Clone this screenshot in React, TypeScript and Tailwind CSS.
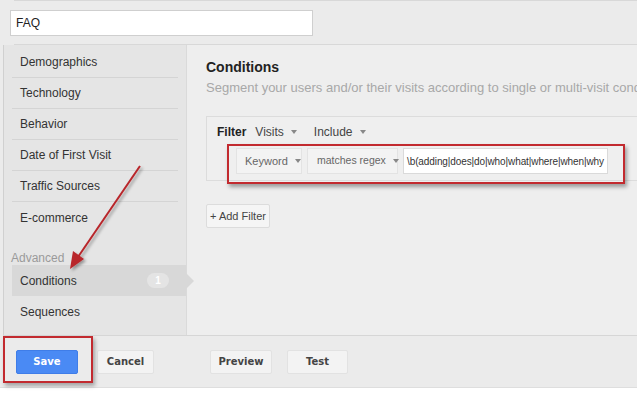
import React from 'react';

const menuItems = ['Demographics', 'Technology', 'Behavior', 'Date of First Visit', 'Traffic Sources', 'E-commerce'];

const Caret = () => (
  <span className="ml-[7px] inline-block w-0 h-0 border-l-[3px] border-r-[3px] border-t-[4px] border-l-transparent border-r-transparent border-t-[#888] align-middle" />
);

const SideItem: React.FC<{ label: string; last?: boolean }> = ({ label, last }) => (
  <div className={`h-[31px] mx-[8px] flex items-center pl-[8px] text-[12px] text-[#333] ${last ? '' : 'border-b border-[#d4d4d4]'}`}>
    {label}
  </div>
);

const FooterButton: React.FC<{ label: string; primary?: boolean; className?: string }> = ({ label, primary, className }) => (
  <button
    className={`h-[24px] rounded-[2px] text-[10px] font-bold font-['DejaVu_Sans',sans-serif] ${
      primary ? 'bg-[#4a8af4] text-white border border-[#3f7de8]' : 'bg-[#f3f3f3] text-[#444] border border-[#e2e2e2]'
    } ${className ?? ''}`}
  >
    {label}
  </button>
);

export default function App() {
  return (
    <div className="relative w-[637px] h-[393px] overflow-hidden bg-[#ebebeb] font-['Liberation_Sans',Arial,sans-serif]">
      {/* top search */}
      <div className="h-[45px] border-t border-[#d8d8d8] ml-[14px] border-b">
        <div className="-ml-[4px] mt-[9px] w-[303px] h-[26px] bg-white border border-[#cfcfcf] flex items-center pl-[5px] text-[12px] text-[#222]">
          FAQ
        </div>
      </div>

      {/* main */}
      <div className="flex h-[290px]">
        <div className="ml-[3px] w-[183px] bg-[#e5e5e5] border-l border-[#d0d0d0] flex flex-col pt-[2px]">
          {menuItems.map((m, i) => (
            <SideItem key={m} label={m} last={i === menuItems.length - 1} />
          ))}
          <div className="mt-[18px] h-[14px] pl-[7px] text-[12px] leading-[14px] text-[#9a9a9a]">Advanced</div>
          <div className="relative ml-[8px] h-[31px] bg-[#d8d8d8] flex items-center pl-[8px] text-[12px] text-[#333]">
            Conditions
            <span className="absolute left-[135px] top-[8px] w-[22px] h-[15px] rounded-full bg-[#e4e4e4] text-white text-[10px] font-bold flex items-center justify-center">
              1
            </span>
            <span className="absolute -right-[8px] top-[8px] w-0 h-0 border-t-[8px] border-b-[8px] border-l-[8px] border-t-transparent border-b-transparent border-l-[#d8d8d8]" />
          </div>
          <SideItem label="Sequences" last />
        </div>

        <div className="flex-1 bg-[#eeeeee] border-l border-[#dadada] pl-[19px] pt-[14px] overflow-hidden">
          <div className="text-[14px] font-bold text-[#222] leading-[16px]">Conditions</div>
          <div className="mt-[5px] text-[13px] text-[#a8a8a8] whitespace-nowrap leading-[16px]">
            Segment your users and/or their visits according to single or multi-visit conditions
          </div>

          <div className="mt-[20px] w-[460px] h-[65px] border border-[#dcdcdc] bg-[#efefef] pl-[10px] pt-[8px]">
            <div className="flex items-center text-[12px] h-[14px]">
              <span className="font-bold text-[#222]">Filter</span>
              <span className="ml-[9px] text-[#444]">Visits</span>
              <Caret />
              <span className="ml-[17px] text-[#444]">Include</span>
              <Caret />
            </div>
            <div className="mt-[9px] ml-[19px] flex gap-[5px]">
              <div className="h-[26px] w-[66px] bg-[#f3f3f3] border border-[#e3e3e3] flex items-center pl-[8px] text-[11px] text-[#666] whitespace-nowrap">
                Keyword
                <Caret />
              </div>
              <div className="h-[26px] w-[91px] bg-[#f3f3f3] border border-[#e3e3e3] flex items-center pl-[9px] text-[10.5px] text-[#666] whitespace-nowrap">
                matches regex
                <Caret />
              </div>
              <div className="h-[26px] w-[205px] bg-white border border-[#dadada] flex items-center pl-[3px] text-[10px] tracking-[-0.1px] text-[#333] whitespace-nowrap overflow-hidden">
                \b(adding|does|do|who|what|where|when|why
              </div>
            </div>
          </div>

          <button className="mt-[23px] h-[24px] w-[64px] bg-[#f5f5f5] border border-[#dcdcdc] rounded-[2px] text-[11px] text-[#444]">
            + Add Filter
          </button>
        </div>
      </div>

      {/* footer */}
      <div className="h-[52px] border-t border-[#d6d6d6] ml-[3px] flex items-center pl-[13px]">
        <FooterButton label="Save" primary className="w-[62px]" />
        <FooterButton label="Cancel" className="ml-[19px] w-[57px]" />
        <FooterButton label="Preview" className="ml-[56px] w-[62px]" />
        <FooterButton label="Test" className="ml-[15px] w-[61px]" />
      </div>
      <div className="h-[6px] bg-white border-t border-[#dedede]" />

      {/* annotations */}
      <div className="absolute left-[227px] top-[144px] w-[398px] h-[40px] border-2 border-[#c22a2f] shadow-[2px_3px_4px_rgba(0,0,0,0.35)]" />
      <div className="absolute left-[3px] top-[336px] w-[90px] h-[47px] border-2 border-[#c22a2f] shadow-[2px_3px_4px_rgba(0,0,0,0.3)]" />
      <svg className="absolute left-0 top-0" width="637" height="393" viewBox="0 0 637 393">
        <defs>
          <filter id="sh" x="-20%" y="-20%" width="140%" height="140%">
            <feDropShadow dx="2" dy="2" stdDeviation="1.5" floodColor="#000" floodOpacity="0.35" />
          </filter>
        </defs>
        <g filter="url(#sh)">
          <line x1="140" y1="166" x2="78" y2="257" stroke="#b8252a" strokeWidth="2" />
          <polygon points="70,269 73,251 84,259" fill="#b8252a" />
        </g>
      </svg>
    </div>
  );
}
